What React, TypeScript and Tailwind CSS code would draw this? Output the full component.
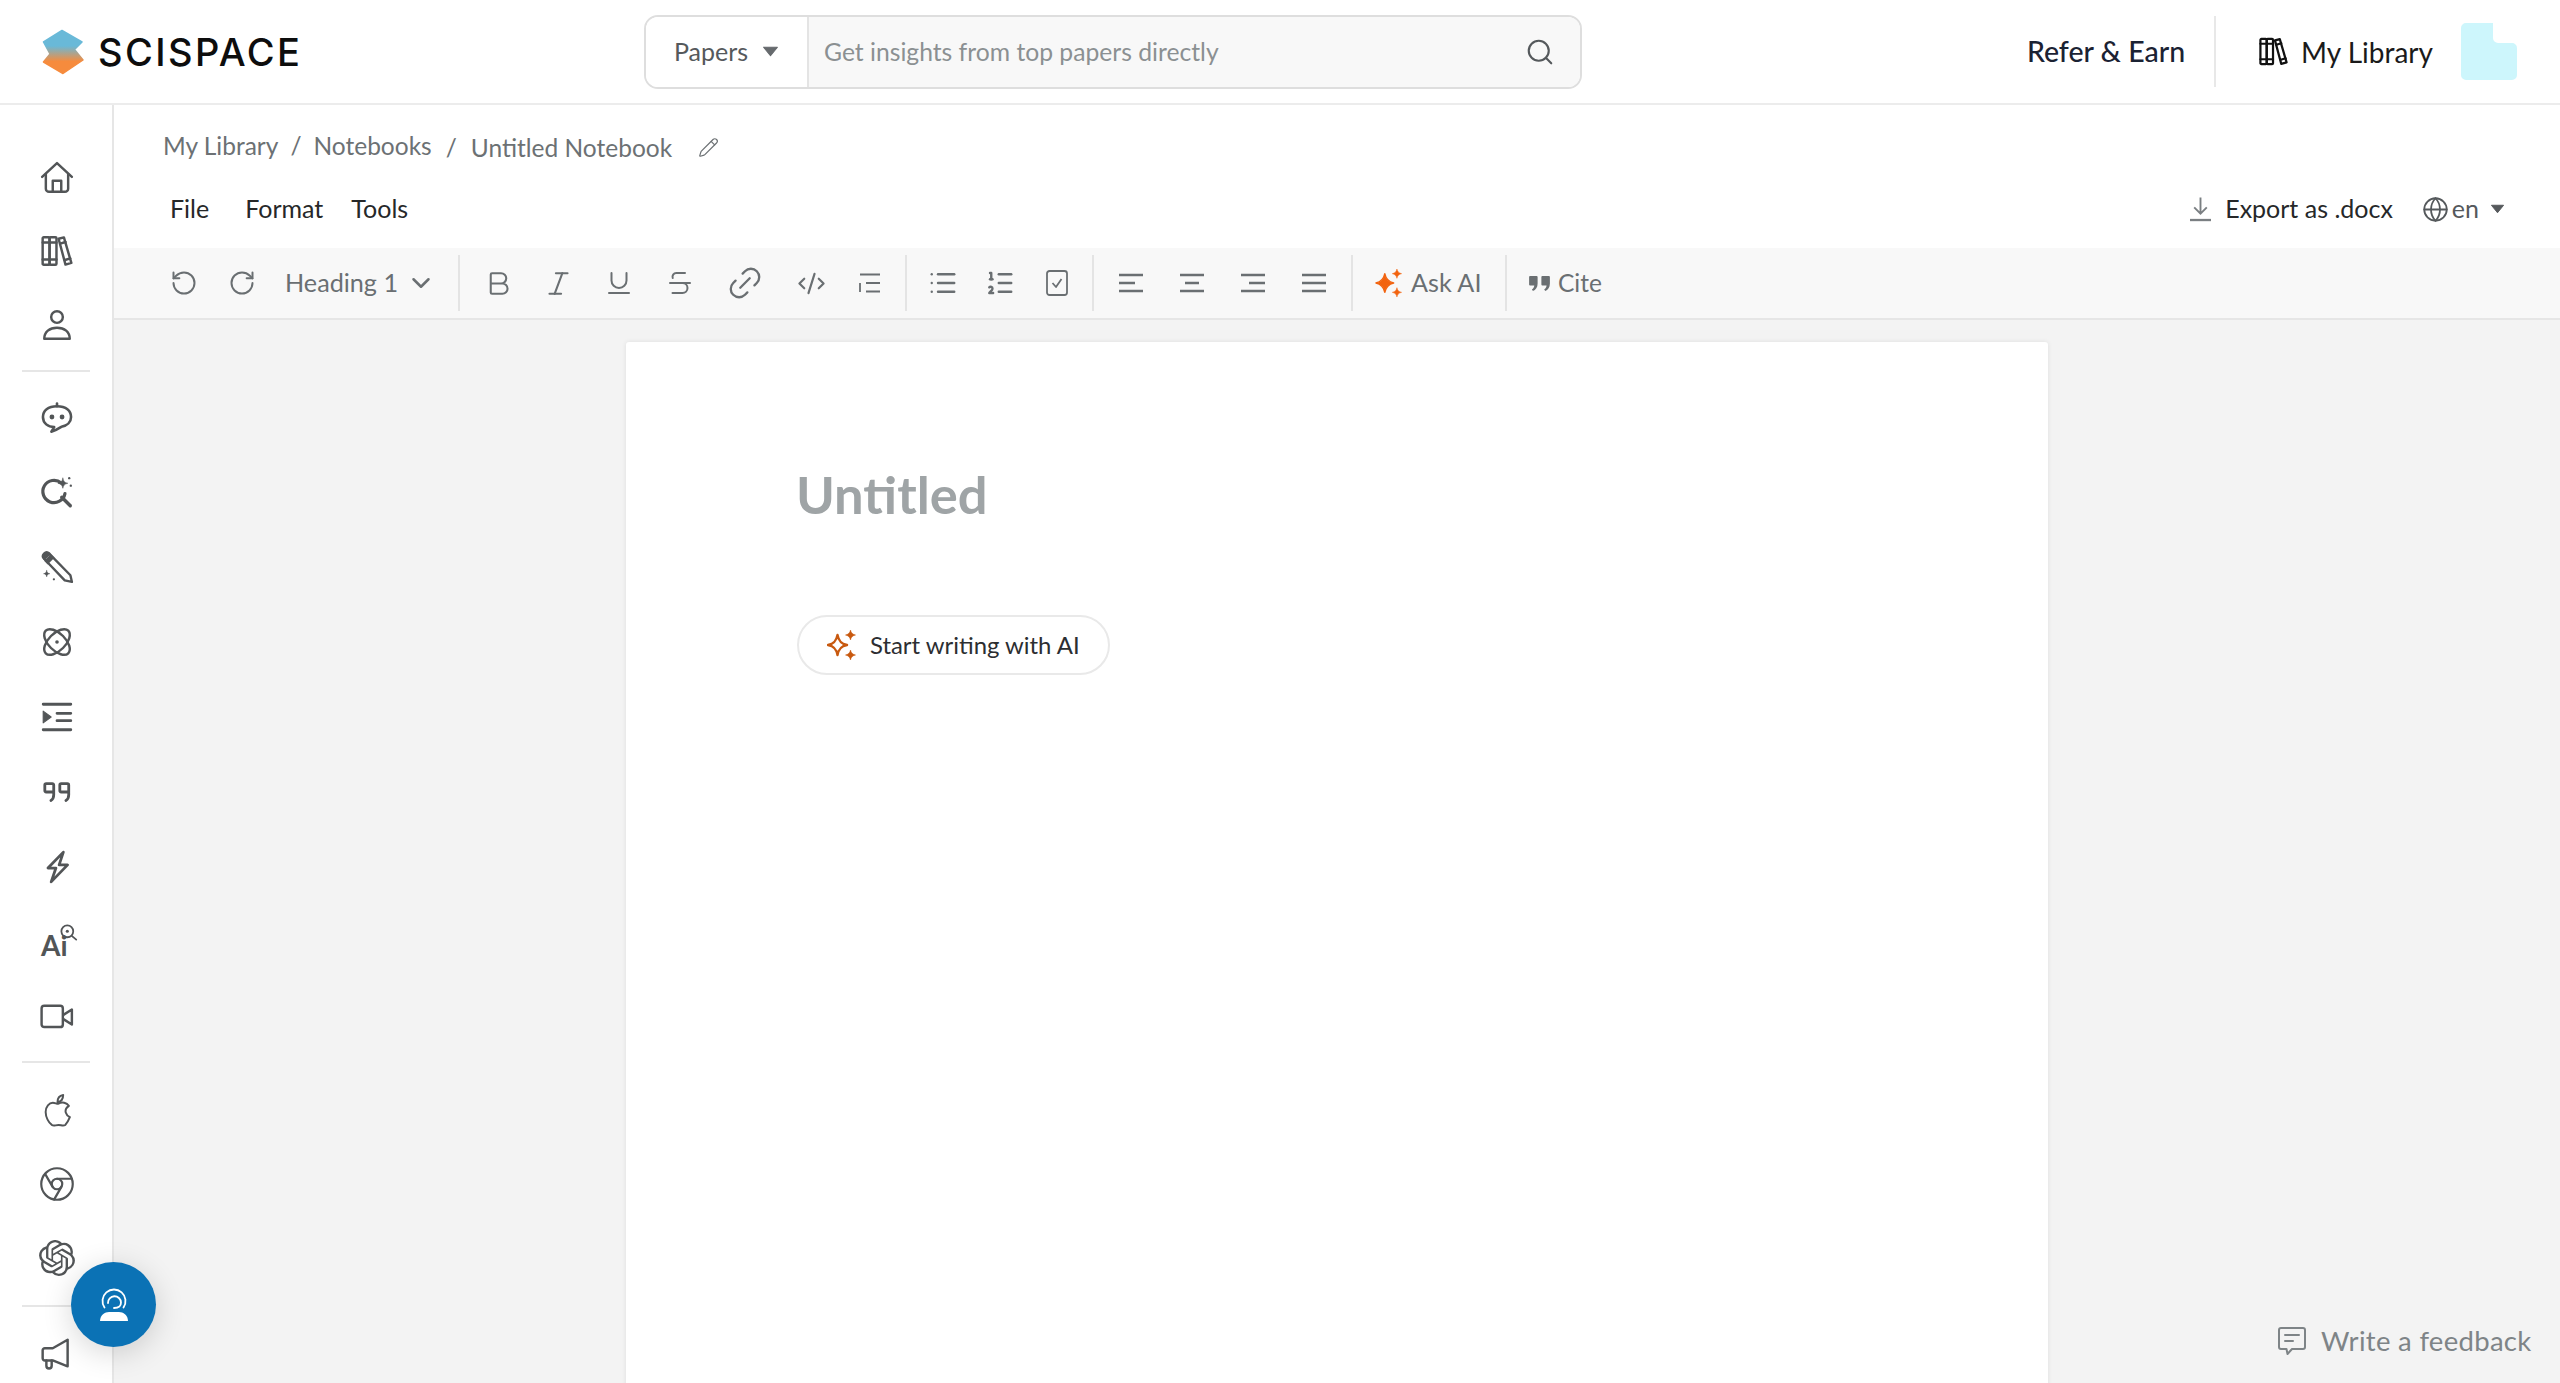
import { ReactNode } from "react";
import {
  Bold,
  ChevronDown,
  CodeXml,
  Globe,
  Italic,
  Link2,
  List,
  ListOrdered,
  Pencil,
  RotateCcw,
  RotateCw,
  Search,
  Strikethrough,
  Underline,
} from "lucide-react";
import { SiOpenai } from "react-icons/si";
import { TbBrandChrome } from "react-icons/tb";

const FONT = "font-['Lato','Liberation_Sans',sans-serif]";

type IconProps = { className?: string };

const Stroke = ({ className, children }: IconProps & { children: ReactNode }) => (
  <svg
    viewBox="0 0 32 32"
    fill="none"
    stroke="currentColor"
    strokeWidth="2.3"
    strokeLinecap="round"
    strokeLinejoin="round"
    className={className}
  >
    {children}
  </svg>
);

const Caret = ({ className }: IconProps) => (
  <svg viewBox="0 0 16 10" className={className}>
    <path d="M1.5 1h13L8 9z" fill="currentColor" stroke="currentColor" strokeLinejoin="round" />
  </svg>
);

const Books = ({ className }: IconProps) => (
  <Stroke className={className}>
    <rect x="2.5" y="3" width="6.5" height="26" rx="1" />
    <rect x="9" y="3" width="6.5" height="26" rx="1" />
    <path d="M2.5 8h13M2.5 24h13" />
    <path d="M17.5 4.5l5-1.3 7 24-5.5 1.600z" />
    <path d="M19 9l5-1.5M23.5 24.5l5-1.5" />
  </Stroke>
);

const STAR_BIG = "M10.500 5C11.700 11 14 13.800 20 15 14 16.200 11.700 19 10.500 25 9.300 19 7 16.200 1 15 7 13.800 9.300 11 10.500 5z";
const STAR_TOP = "M23.500 0C24.200 3 25.500 4.300 28.500 5 25.500 5.700 24.200 7 23.500 10 22.800 7 21.500 5.700 18.500 5 21.500 4.300 22.800 3 23.500 0z";
const STAR_BOTTOM = "M23.500 20C24.200 23 25.500 24.300 28.500 25 25.500 25.700 24.200 27 23.500 30 22.800 27 21.500 25.700 18.500 25 21.500 24.300 22.800 23 23.500 20z";

const Sparkle = ({ className }: IconProps) => (
  <svg viewBox="0 0 30 30" fill="currentColor" stroke="currentColor" strokeWidth="1.500" strokeLinejoin="round" className={className}>
    <path d={STAR_BIG} />
    <path d={STAR_TOP} strokeWidth="0.500" />
    <path d={STAR_BOTTOM} strokeWidth="0.500" />
  </svg>
);

const QuoteMark = ({ className }: IconProps) => (
  <svg viewBox="0 0 24 18" fill="currentColor" className={className}>
    <path d="M2 1h7a1 1 0 0 1 1 1v7c0 4-2 7-5 8l-1-2c1.5-.7 2.3-2 2.5-4H2a1 1 0 0 1-1-1V2a1 1 0 0 1 1-1z" />
    <path d="M15 1h7a1 1 0 0 1 1 1v7c0 4-2 7-5 8l-1-2c1.5-.7 2.3-2 2.5-4H15a1 1 0 0 1-1-1V2a1 1 0 0 1 1-1z" />
  </svg>
);

const Logo = () => (
  <svg viewBox="0 0 42 46" className="h-[46px] w-[42px]">
    <defs>
      <linearGradient id="logo-fill" x1="0" y1="0" x2="0" y2="1">
        <stop offset="0.36" stopColor="#69b9d8" />
        <stop offset="0.72" stopColor="#f68b3d" />
      </linearGradient>
    </defs>
    <path
      d="M1.5 13 20 1.5 40 13l-7.5 7.5L41 31 21 44.500 1.500 33l6.500-8z"
      fill="url(#logo-fill)"
      stroke="url(#logo-fill)"
      strokeWidth="1.5"
      strokeLinejoin="round"
    />
  </svg>
);

const SIDE_TOP = [
  <Stroke key="home" className="size-[34px]">
    <path d="M2 15 16 2l14 13" />
    <path d="M5.5 12.5V26a3 3 0 0 0 3 3h15a3 3 0 0 0 3-3V12.5" />
    <path d="M12 29V18.5h8V29" />
  </Stroke>,
  <Books key="books" className="size-[34px]" />,
  <Stroke key="user" className="size-[34px]">
    <circle cx="16" cy="8.5" r="5.5" />
    <path d="M4 29c0-6.500 5-10.500 12-10.500S28 22.500 28 29z" />
  </Stroke>,
];

const SIDE_TOOLS = [
  <Stroke key="chat" className="size-[36px]">
    <path d="M16 4v2.5" />
    <path d="M16 6.500C8 6.500 3.500 10.500 3.500 16S8 25 13.500 25l-2.500 4c4-1 7-3 9-4.300 5-1 8.500-4.200 8.500-8.700 0-5.500-4.500-9.500-12.500-9.500z" />
    <circle cx="11.5" cy="16" r="1" fill="currentColor" />
    <circle cx="20.5" cy="16" r="1" fill="currentColor" />
  </Stroke>,
  <Stroke key="spark-search" className="size-[34px]">
    <path d="M20 7.500a10.500 10.500 0 1 0 3.500 10" strokeWidth="3" />
    <path d="m20.500 21 8 8" strokeWidth="3.200" />
    <path d="M21.500 3c.6 3 1.700 4.200 4.700 4.800-3 .6-4.100 1.700-4.700 4.700-.6-3-1.700-4.100-4.700-4.700 3-.6 4.100-1.800 4.700-4.800z" fill="currentColor" strokeWidth="0.500" />
    <circle cx="27.5" cy="3" r="1.100" fill="currentColor" stroke="none" />
    <circle cx="29" cy="10" r="1.100" fill="currentColor" stroke="none" />
  </Stroke>,
  <Stroke key="pen" className="size-[33px]">
    <path d="M3 7.500 8 2.500 28.500 23.500 30 30 23 28.500z" />
    <path d="M3 7.500 8 2.500C6.500 1 4.500 1 3 2.500S1.500 6 3 7.500z" fill="currentColor" />
    <path d="M3 9.500 9.500 3 13 6.500 6.500 13z" fill="currentColor" stroke="none" />
    <path d="M5.500 19c.4 2 1.100 2.700 3 3-1.900.3-2.600 1-3 3-.4-2-1.100-2.700-3-3 1.900-.3 2.600-1 3-3z" fill="currentColor" strokeWidth="0.500" />
    <circle cx="12.5" cy="27.500" r="1.100" fill="currentColor" stroke="none" />
  </Stroke>,
  <Stroke key="atom" className="size-[34px]">
    <ellipse cx="16" cy="16" rx="15" ry="8" transform="rotate(45 16 16)" />
    <ellipse cx="16" cy="16" rx="15" ry="8" transform="rotate(-45 16 16)" />
    <circle cx="16" cy="16" r="1.700" fill="currentColor" stroke="none" />
  </Stroke>,
  <Stroke key="indent" className="size-[34px]">
    <path d="M3 4h26M16 12.500h13M16 19.500h13M3 28h26" strokeWidth="2.600" />
    <path d="M3 10.500v11l7.500-5.500z" fill="currentColor" strokeWidth="1" />
  </Stroke>,
  <svg key="quote" viewBox="0 0 32 22" fill="none" stroke="currentColor" strokeWidth="3" strokeLinecap="round" strokeLinejoin="round" className="h-[24px] w-[30px]">
    <path d="M12.500 11H4.500a1.500 1.500 0 0 1-1.500-1.500v-6A1.500 1.500 0 0 1 4.500 2h6.500a1.500 1.500 0 0 1 1.500 1.500V14c0 3-1 5-3 6" />
    <path d="M28.500 11h-8a1.500 1.500 0 0 1-1.500-1.500v-6A1.500 1.500 0 0 1 20.500 2H27a1.500 1.500 0 0 1 1.500 1.500V14c0 3-1 5-3 6" />
  </svg>,
  <Stroke key="zap" className="size-[34px]">
    <path d="M22 2 7.500 17H15l-4.500 13 15.500-16h-8z" strokeWidth="2.600" />
  </Stroke>,
  <div key="ai" className="relative h-[34px] w-[30px]">
    <span className="absolute bottom-0 -left-[1px] text-[28px] leading-none font-bold">Ai</span>
    <svg viewBox="0 0 16 16" fill="none" stroke="currentColor" strokeWidth="1.500" strokeLinecap="round" className="absolute -top-[2px] -right-[6px] size-[19px]">
      <circle cx="7" cy="7" r="5" />
      <circle cx="7" cy="7" r="1.300" fill="currentColor" stroke="none" />
      <path d="m11 11 3.500 3" />
    </svg>
  </div>,
  <Stroke key="video" className="size-[34px]">
    <rect x="1.5" y="5.5" width="20" height="20" rx="2.500" />
    <path d="M22 14l8-5v14l-8-5" />
  </Stroke>,
];

const SIDE_BRANDS = [
  <svg key="apple" viewBox="0 0 26 32" fill="none" stroke="currentColor" strokeWidth="1.900" strokeLinejoin="round" className="h-[33px] w-[27px]">
    <path d="M13 8c0-4 2.500-6.500 5.500-7 0 3.500-2 6.500-5.500 7z" />
    <path d="M13.500 9.500c2-1 4-1.500 6-1 2 .5 3.500 1.500 4.500 3-3 2-3.500 4.500-3 6.500.5 2 2 3.500 4 4.500-1 2.500-2.500 5.500-4.500 7.500-2 1.500-4 0-6.500 0-3 0-4.500 1.500-6.500 0-3-2-6-7.500-6-12.500 0-5.500 3.500-9 7-9 2 0 3.500 1 5 1z" />
  </svg>,
  <TbBrandChrome key="chrome" className="size-[42px]" style={{ strokeWidth: 1.25 }} />,
  <SiOpenai key="openai" className="size-[36px]" />,
];

const SideRow = ({ className, children }: { className: string; children: ReactNode }) => (
  <div className={`flex shrink-0 items-center justify-center pl-[2px] text-[#525557] ${className}`}>{children}</div>
);

const Sidebar = () => (
  <aside className="flex w-[114px] shrink-0 flex-col overflow-hidden border-r-2 border-[#e6e6e6] bg-white pt-[36px]">
    {SIDE_TOP.map((icon) => (
      <SideRow key={icon.key} className="h-[73.5px]">
        {icon}
      </SideRow>
    ))}
    <div className="mx-[22px] mt-[8.5px] mb-[8px] h-[2px] shrink-0 bg-[#e6e6e6]" />
    {SIDE_TOOLS.map((icon) => (
      <SideRow key={icon.key} className="h-[74.9px]">
        {icon}
      </SideRow>
    ))}
    <div className="mx-[22px] mt-[7px] mb-[10px] h-[2px] shrink-0 bg-[#e6e6e6]" />
    {SIDE_BRANDS.map((icon) => (
      <SideRow key={icon.key} className="h-[74px]">
        {icon}
      </SideRow>
    ))}
    <div className="mx-[22px] mt-[10px] mb-[9px] h-[2px] shrink-0 bg-[#e6e6e6]" />
    <SideRow className="h-[74px]">
      <Stroke className="size-[34px]">
        <path d="M26 3.5v25L12 23H4.500A2 2 0 0 1 2.500 21v-7.500a2 2 0 0 1 2-2H12z" />
        <path d="M6 23v5a2.500 2.500 0 0 0 5 0v-5" />
      </Stroke>
    </SideRow>
  </aside>
);

const Header = () => (
  <header className="flex h-[105px] shrink-0 items-center border-b-2 border-[#ececec] bg-white pr-[43px] pl-[42px]">
    <Logo />
    <span className="ml-[14px] w-[202px] font-['Inter',sans-serif] text-[38px] leading-none font-medium tracking-[2.4px] text-[#0d0d0d]">
      SCISPACE
    </span>
    <div className="ml-[344px] flex h-[74px] w-[938px] overflow-hidden rounded-[14px] border-2 border-[#dedede]">
      <div className="flex w-[163px] items-center border-r-2 border-[#e4e4e4] bg-white pl-[28px] text-[25px] text-[#55595c]">
        Papers
        <Caret className="ml-[14px] h-[11px] w-[17px] text-[#666a6d]" />
      </div>
      <div className="flex flex-1 items-center bg-[#f8f8f8] pr-[25px] pl-[15px] text-[24.7px] text-[#8b9092]">
        <span className="flex-1">Get insights from top papers directly</span>
        <Search className="size-[30px] text-[#55595c]" strokeWidth={1.7} />
      </div>
    </div>
    <div className="flex-1" />
    <span className="text-[28.5px] font-medium text-[#1b2233]">Refer &amp; Earn</span>
    <div className="mr-[42px] ml-[29px] h-[71px] w-[2px] bg-[#e8e8e8]" />
    <Books className="size-[31px] text-[#111111]" />
    <span className="mr-[28px] ml-[12px] text-[28px] text-[#1a1a1a]">My Library</span>
    <svg viewBox="0 0 56 57" className="h-[57px] w-[56px]">
      <path
        d="M5 0h27v15a5 5 0 0 0 5 5h14a5 5 0 0 1 5 5v27a5 5 0 0 1-5 5H5a5 5 0 0 1-5-5V5a5 5 0 0 1 5-5z"
        fill="#cdf6fc"
      />
    </svg>
  </header>
);

const Crumbs = () => (
  <div className="flex h-[82px] items-center pl-[49px] text-[24.5px] text-[#6c7174]">
    <span>My Library</span>
    <span className="mx-[12px]">/</span>
    <span>Notebooks</span>
    <span className="mx-[14px] mt-[4px]">/</span>
    <span className="mt-[4px]">Untitled Notebook</span>
    <Pencil className="mt-[2px] ml-[26px] size-[21px]" strokeWidth={1.4} />
  </div>
);

const MenuRow = () => (
  <div className="mb-[17px] flex h-[44px] items-center pr-[55px] pl-[56px] text-[25px] text-[#262829]">
    <span>File</span>
    <span className="ml-[36px]">Format</span>
    <span className="ml-[28px]">Tools</span>
    <div className="flex-1" />
    <svg viewBox="0 0 20 24" fill="none" className="h-[26px] w-[21px] text-[#7a7f82]" stroke="currentColor" strokeWidth="1.8">
      <path d="M10 1v15M4 10.500l6 6 6-6" />
      <path d="M0 22.500h20" strokeWidth="2.200" />
    </svg>
    <span className="ml-[14px]">Export as .docx</span>
    <Globe className="ml-[29px] size-[27px] text-[#55595c]" strokeWidth={1.6} />
    <span className="ml-[3px] text-[#55595c]">en</span>
    <Caret className="ml-[11px] h-[10px] w-[15px] text-[#55595c]" />
  </div>
);

const Tool = ({ className, children }: { className: string; children: ReactNode }) => (
  <div className={`flex items-center justify-center ${className}`}>{children}</div>
);

const Sep = () => <div className="h-[56px] w-[2px] shrink-0 bg-[#e4e4e4]" />;

const TextAlign = ({ lines }: { lines: string[] }) => (
  <svg viewBox="0 0 24 20" fill="none" stroke="currentColor" strokeWidth="2.5" className="h-[20px] w-[24px]">
    {lines.map((d) => (
      <path key={d} d={d} />
    ))}
  </svg>
);

const Toolbar = () => (
  <div className="flex h-[72px] shrink-0 items-center border-b-2 border-[#e6e6e6] bg-[#f8f8f8] pl-[41px] text-[25.2px] text-[#6a6f72]">
    <Tool className="w-[58px]">
      <RotateCcw className="size-[28px]" strokeWidth={1.7} />
    </Tool>
    <Tool className="w-[58px]">
      <RotateCw className="size-[28px]" strokeWidth={1.7} />
    </Tool>
    <div className="flex w-[187px] items-center pl-[14px]">
      <span className="w-[114px]">Heading 1</span>
      <ChevronDown className="ml-[7px] size-[30px]" strokeWidth={2} />
    </div>
    <Sep />
    <div className="ml-[8px] flex">
      <Tool className="w-[60.5px]">
        <Bold className="size-[31px]" strokeWidth={1.6} />
      </Tool>
      <Tool className="w-[60.5px]">
        <Italic className="size-[31px]" strokeWidth={1.6} />
      </Tool>
      <Tool className="w-[60.5px]">
        <Underline className="size-[30px]" strokeWidth={1.6} />
      </Tool>
      <Tool className="w-[60.5px]">
        <Strikethrough className="size-[30px]" strokeWidth={1.6} />
      </Tool>
      <Tool className="w-[70px]">
        <Link2 className="size-[40px] -rotate-45" strokeWidth={1.4} />
      </Tool>
      <Tool className="w-[62px]">
        <CodeXml className="size-[29px]" strokeWidth={1.8} />
      </Tool>
      <Tool className="w-[56px]">
        <svg viewBox="0 0 24 20" fill="none" stroke="currentColor" strokeWidth="1.8" className="h-[20px] w-[24px]">
          <path d="M2 1.5h20M2 10v9M8 10h14M8 18.500h14" />
        </svg>
      </Tool>
    </div>
    <div className="ml-[7px]">
      <Sep />
    </div>
    <div className="ml-[7px] flex">
      <Tool className="w-[57px]">
        <List className="size-[30px]" strokeWidth={1.9} />
      </Tool>
      <Tool className="w-[57px]">
        <ListOrdered className="size-[30px]" strokeWidth={1.9} />
      </Tool>
      <Tool className="w-[57px]">
        <svg viewBox="0 0 22 26" fill="none" stroke="currentColor" strokeWidth="1.8" strokeLinejoin="round" className="h-[26px] w-[22px]">
          <rect x="1" y="1" width="20" height="24" rx="2.500" />
          <path d="m6.500 13 3.500 4 5.500-8" />
        </svg>
      </Tool>
    </div>
    <div className="ml-[7px]">
      <Sep />
    </div>
    <div className="ml-[6px] flex">
      <Tool className="w-[61px]">
        <TextAlign lines={["M0 2h24", "M0 10h16", "M0 18h24"]} />
      </Tool>
      <Tool className="w-[61px]">
        <TextAlign lines={["M0 2h24", "M5 10h14", "M0 18h24"]} />
      </Tool>
      <Tool className="w-[61px]">
        <TextAlign lines={["M0 2h24", "M8 10h16", "M0 18h24"]} />
      </Tool>
      <Tool className="w-[61px]">
        <TextAlign lines={["M0 2h24", "M0 10h24", "M0 18h24"]} />
      </Tool>
    </div>
    <div className="ml-[7px]">
      <Sep />
    </div>
    <div className="flex w-[152px] items-center pl-[22px]">
      <Sparkle className="size-[28px] text-[#f2630f]" />
      <span className="ml-[8px]">Ask AI</span>
    </div>
    <Sep />
    <div className="flex items-center pl-[21px]">
      <QuoteMark className="h-[17px] w-[23px] text-[#6a6f72]" />
      <span className="ml-[7px] text-[24.5px]">Cite</span>
    </div>
  </div>
);

const Paper = () => (
  <div className="mx-auto mt-[22px] h-full w-[1422px] rounded-t-[3px] bg-white px-[171px] pt-[120px] shadow-[0_0_5px_rgba(0,0,0,0.09)]">
    <h1 className="-ml-[1px] text-[52.5px] leading-[64px] font-bold text-[#9fa4a6]">Untitled</h1>
    <button
      type="button"
      className="mt-[89px] flex h-[60px] w-[313px] items-center rounded-full border-2 border-[#e9e9e9] bg-white pl-[28px] text-[23.9px] text-[#2c2e31]"
    >
      <svg viewBox="0 0 30 30" fill="none" stroke="#c8590f" strokeWidth="2.4" strokeLinejoin="round" className="size-[30px]">
        <path d={STAR_BIG} />
        <path d={STAR_TOP} fill="#c8590f" strokeWidth="0.5" />
        <path d={STAR_BOTTOM} fill="#c8590f" strokeWidth="0.5" />
      </svg>
      <span className="ml-[13px]">Start writing with AI</span>
    </button>
  </div>
);

export default function App() {
  return (
    <div className={`relative flex h-screen flex-col overflow-hidden bg-white ${FONT}`}>
      <Header />
      <div className="flex min-h-0 flex-1">
        <Sidebar />
        <main className="flex min-w-0 flex-1 flex-col">
          <Crumbs />
          <MenuRow />
          <Toolbar />
          <div className="min-h-0 flex-1 overflow-hidden bg-[#f3f3f3]">
            <Paper />
          </div>
        </main>
      </div>

      {/* support bubble sits over the sidebar edge */}
      <button
        type="button"
        className="absolute top-[1262px] left-[71px] flex size-[85px] items-center justify-center rounded-full bg-[#0b72b5] shadow-[0_6px_30px_rgba(0,0,0,0.16)]"
      >
        <svg viewBox="0 0 30 33" fill="none" stroke="#fff" strokeWidth="1.8" strokeLinecap="round" className="h-[33px] w-[30px]">
          <path d="M5.500 19.500a11.500 11.500 0 1 1 19 0" />
          <path d="M9 15a6.500 6.500 0 0 1 13-.5c0 3-2 5.500-7 5.500" />
          <path d="M1 33c0-6 5-9 9-9h10c4 0 9 3 9 9z" fill="#fff" stroke="none" />
        </svg>
      </button>

      {/* feedback link floats over the page corner */}
      <div className="absolute top-[1325px] left-[2278px] flex h-[32px] items-center text-[#7e8487]">
        <svg viewBox="0 0 28 29" fill="none" stroke="currentColor" strokeWidth="2" strokeLinejoin="round" className="h-[29px] w-[28px]">
          <path d="M3 1h22a2 2 0 0 1 2 2v17a2 2 0 0 1-2 2H14l-4.500 5-1-5H3a2 2 0 0 1-2-2V3a2 2 0 0 1 2-2z" />
          <path d="M7 8h14M7 14h8" strokeLinecap="round" />
        </svg>
        <span className="ml-[15px] text-[27.5px] tracking-[0.3px]">Write a feedback</span>
      </div>
    </div>
  );
}
